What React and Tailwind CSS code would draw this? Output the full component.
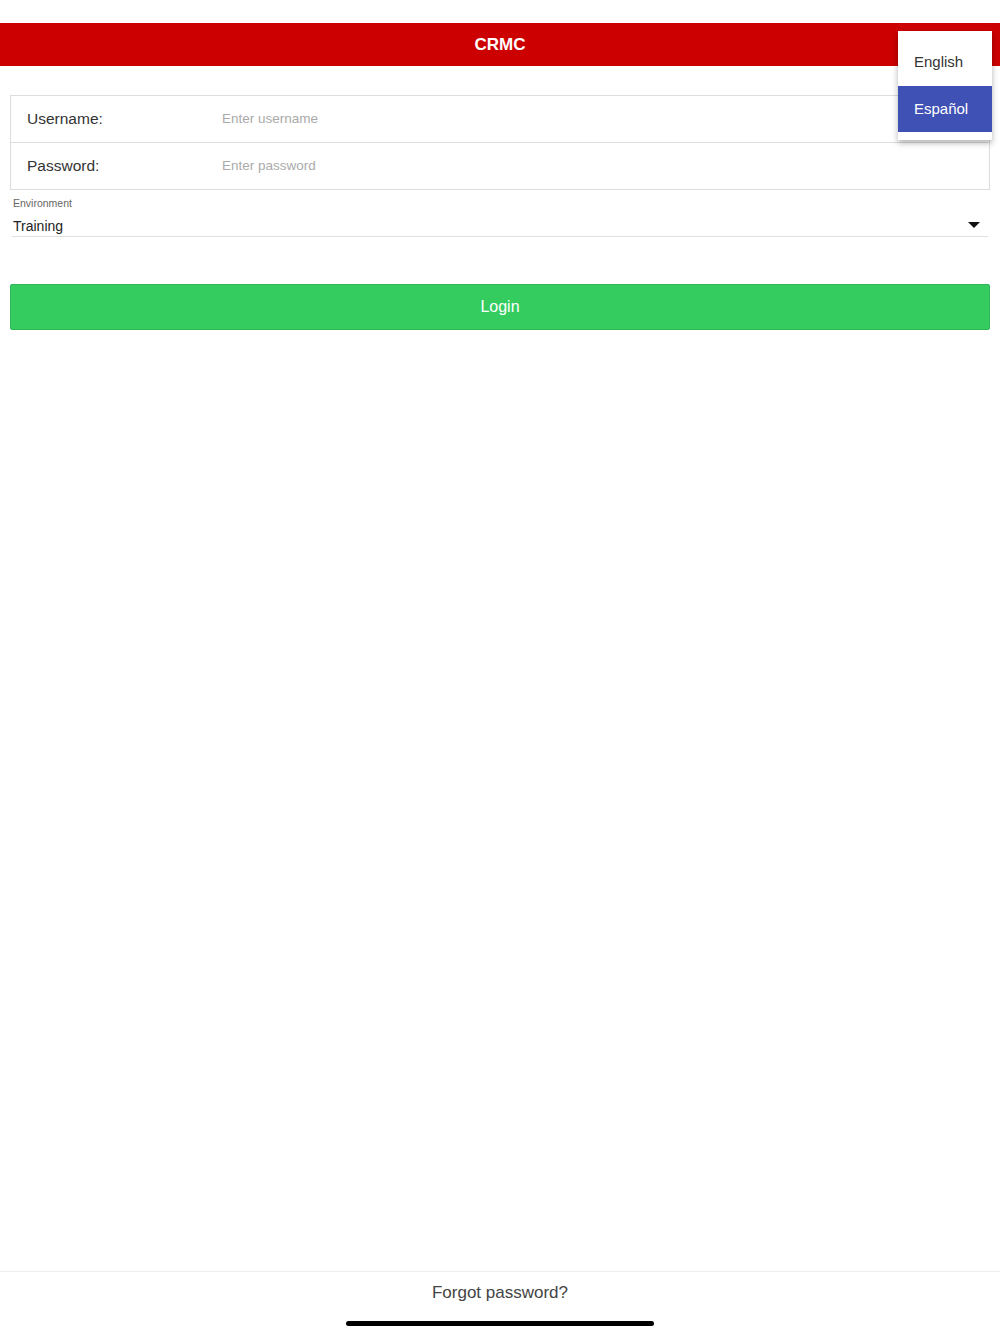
import { useState } from 'react'

export default function App() {
  const [lang, setLang] = useState('es')

  return (
    <div className="relative flex h-[1334px] w-[1000px] flex-col bg-white font-['Liberation_Sans',Arial,sans-serif]">
      <div className="h-[23px]" />
      <header className="flex h-[43px] items-center justify-center bg-[#cc0000]">
        <span className="text-[17px] font-bold text-white">CRMC</span>
      </header>

      <main className="flex-1 px-[10px] pt-[29px]">
        <div className="border border-[#dddddd]">
          <div className="flex h-[47px] items-center border-b border-[#dddddd]">
            <label className="w-[211px] pl-4 text-[15.5px] text-[#333]">Username:</label>
            <input
              type="text"
              placeholder="Enter username"
              className="flex-1 bg-transparent text-[13.5px] text-[#333] outline-none placeholder:text-[#aaaaaa]"
            />
          </div>
          <div className="flex h-[46px] items-center">
            <label className="w-[211px] pl-4 text-[15.5px] text-[#333]">Password:</label>
            <input
              type="password"
              placeholder="Enter password"
              className="flex-1 bg-transparent text-[13.5px] text-[#333] outline-none placeholder:text-[#aaaaaa]"
            />
          </div>
        </div>

        <div className="mx-[2px] mt-[6px] border-b border-[#e0e0e0]">
          <div className="pl-[1px] text-[10.5px] text-[#666]">Environment</div>
          <div className="mt-[4px] flex items-center justify-between pl-[1px] leading-[20px]">
            <span className="text-[14px] text-[#222]">Training</span>
            <svg width="12" height="7" viewBox="0 0 12 7" className="mr-[8px]">
              <path d="M0 0 L12 0 L6 6 Z" fill="#111" />
            </svg>
          </div>
        </div>

        <button className="mt-[47px] flex h-[46px] w-full items-center justify-center rounded-[2px] border border-[#2fb855] bg-[#34cc5f] text-[16px] text-white">
          Login
        </button>
      </main>

      <footer className="flex h-[63px] flex-col items-center border-t border-[#eeeeee]">
        <span className="mt-[8px] text-[17px] text-[#444]">Forgot password?</span>
        <div className="mt-[15px] h-[5px] w-[308px] rounded-full bg-black" />
      </footer>

      <div className="absolute left-[898px] top-[31px] w-[94px] bg-white py-2 shadow-[0_3px_6px_rgba(0,0,0,0.3)]">
        <div
          onClick={() => setLang('en')}
          className={`flex h-[47px] items-center px-4 text-[15px] ${lang === 'en' ? 'bg-[#3f51b5] text-white' : 'text-[#333]'}`}
        >
          English
        </div>
        <div
          onClick={() => setLang('es')}
          className={`flex h-[46px] items-center px-4 text-[15px] ${lang === 'es' ? 'bg-[#3f51b5] text-white' : 'text-[#333]'}`}
        >
          Español
        </div>
      </div>
    </div>
  )
}
